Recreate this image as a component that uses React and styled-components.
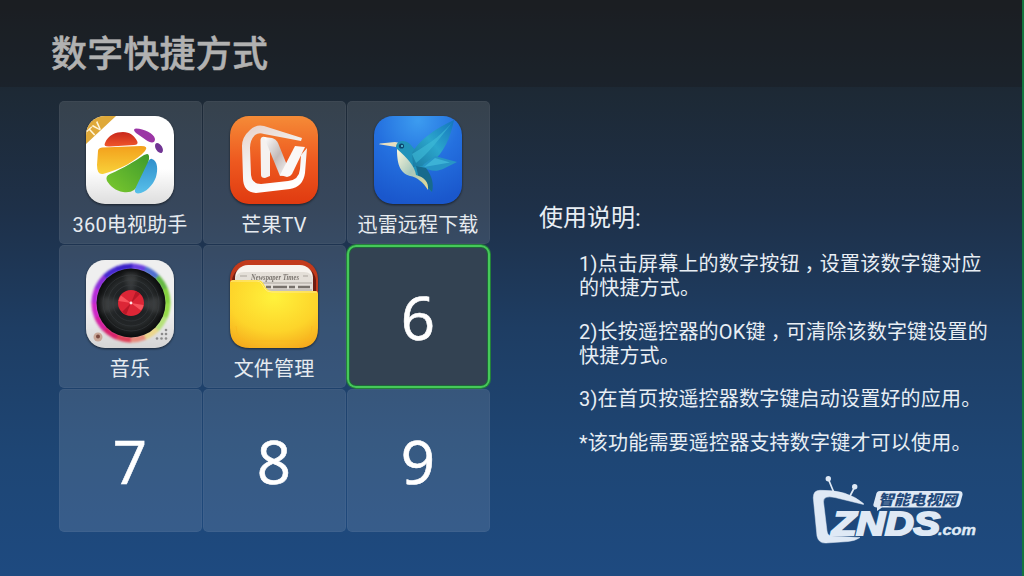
import React from 'react'
import styled, { createGlobalStyle } from 'styled-components'

const GlobalStyle = createGlobalStyle`
  * {
    box-sizing: border-box;
    margin: 0;
    padding: 0;
  }

  body {
    overflow: hidden;
    background: #1e4a80;
    font-family: Roboto, "Noto Sans CJK SC", sans-serif;
  }
`

const AssistantIcon = () => (
  <Icon viewBox="0 0 88 88">
    <defs>
      <linearGradient id="paper" x2="0" y2="1">
        <stop offset="0.6" stopColor="#fff" />
        <stop offset="1" stopColor="#dedede" />
      </linearGradient>
      <linearGradient id="red" x2="0" y2="1">
        <stop offset="0" stopColor="#c8281c" />
        <stop offset="1" stopColor="#f0562a" />
      </linearGradient>
      <linearGradient id="amber" x2="0" y2="1">
        <stop offset="0" stopColor="#f3a01c" />
        <stop offset="1" stopColor="#f8d23a" />
      </linearGradient>
      <linearGradient id="green" x1="1" x2="0" y2="1">
        <stop offset="0" stopColor="#3d9a2c" />
        <stop offset="1" stopColor="#7cc92e" />
      </linearGradient>
      <linearGradient id="sky" x2="0" y2="1">
        <stop offset="0" stopColor="#2f8fcb" />
        <stop offset="1" stopColor="#58c0ea" />
      </linearGradient>
      <clipPath id="round">
        <rect width="88" height="88" rx="19" />
      </clipPath>
    </defs>
    <g clipPath="url(#round)">
      <rect width="88" height="88" fill="url(#paper)" />
      <path d="M0 0H30L0 28Z" fill="#dfa93a" />
      <text x="3" y="18" transform="rotate(-43 9 16)" fill="#fff6dc" fontSize="12" fontWeight="500">TV</text>
    </g>
    <path d="M19 27C22 19 30 16 37 16C44 16 49 20 51.500 26Q52 29 48 29L24 30.500Q17 31 19 27Z" fill="url(#red)" />
    <path d="M12 35Q12 32 16 31.500L55 30Q63 30 59 35C50 45 35 53 17 58Q11 59 11 49Z" fill="url(#amber)" />
    <path d="M61 38Q63.500 38 63 43C61 56 55 68 48 74Q44 77 37 76C30 75 24 70 21 65Q19 60 24 58C38 52 49 45 58 39Z" fill="url(#green)" />
    <path d="M66 43C72 45 72 54 70 61C67 69 60 77 52 77.500Q47 77 50 71L62 46Q64 42 66 43Z" fill="url(#sky)" />
    <path d="M50 12.500C58 13 68 17 69 23C69 28 64 27 60 24L50 17Q46 13 50 12.500Z" fill="#9b35a5" />
    <ellipse cx="73" cy="32" rx="3.2" ry="5.5" transform="rotate(-32 73 32)" fill="#713594" />
  </Icon>
)

const MangoIcon = () => (
  <Icon viewBox="0 0 88 88">
    <defs>
      <linearGradient id="orange" x2="0" y2="1">
        <stop offset="0" stopColor="#f58b37" />
        <stop offset="0.5" stopColor="#ee5a20" />
        <stop offset="1" stopColor="#e03a10" />
      </linearGradient>
      <linearGradient id="silver" x2="0.4" y2="1">
        <stop offset="0" stopColor="#e7cfc6" />
        <stop offset="0.5" stopColor="#f1efee" />
        <stop offset="1" stopColor="#fff" />
      </linearGradient>
      <linearGradient id="fold" x2="1" y2="1">
        <stop offset="0" stopColor="#fff" />
        <stop offset="0.5" stopColor="#c3bbb9" />
        <stop offset="1" stopColor="#fff" />
      </linearGradient>
    </defs>
    <rect width="88" height="88" rx="19" fill="url(#orange)" />
    <path d="M72 22L34 10Q26 8 20 14Q12 21 12 30L13 62Q13 76 26 77L60 73Q73 71 75 57L77 32L71 39L70 53Q69 64 58 65L31 68Q22 68 21 59L20 32Q20 24 25 19Q29 16 34 18L71 25Z" fill="url(#silver)" />
    <path d="M30.500 24Q31 20 35 21L40 24L40 60L35 62Q31 62 31 59Z" fill="#f5f2f0" />
    <path d="M34 21L42 22Q46 23 48 27L61 59L50 60Z" fill="url(#fold)" />
    <path d="M65 30L75 31L62 58Q60 61 57 61L50 59Z" fill="#faf8f7" />
  </Icon>
)

const BirdIcon = () => (
  <Icon viewBox="0 0 88 88">
    <defs>
      <radialGradient id="blue" cx="0.5" cy="0.05" r="0.95">
        <stop offset="0" stopColor="#3c9cf0" />
        <stop offset="0.5" stopColor="#2470df" />
        <stop offset="1" stopColor="#1a57cc" />
      </radialGradient>
      <linearGradient id="wing" x1="1" x2="0" y2="1">
        <stop offset="0" stopColor="#1474bd" />
        <stop offset="0.5" stopColor="#2ba6cc" />
        <stop offset="1" stopColor="#1a7ba3" />
      </linearGradient>
      <linearGradient id="belly" x2="1" y2="1">
        <stop offset="0" stopColor="#fff9dc" />
        <stop offset="0.5" stopColor="#a7c8bc" />
        <stop offset="1" stopColor="#e9d994" />
      </linearGradient>
    </defs>
    <rect width="88" height="88" rx="19" fill="url(#blue)" />
    <path d="M22 31L5 28.300L6 27.500L21 26L26 27Z" fill="#e8dfc0" />
    <path d="M22 31C22 24 31 23 36 28L42 35L56 47L52 56L58 76L42 61L27 46Z" fill="#2193ba" />
    <path d="M38 37C45 24 62 12 80 4C77 20 70 37 58 46C50 51 43 50 39 51Z" fill="url(#wing)" />
    <path d="M42 47C54 38 66 22 80 4C70 17 58 26 38 38Z" fill="#3fbcd8" opacity="0.6" />
    <path d="M50 48L61 40L83 46L69 53C62 56 56 55 48 51Z" fill="#2795c5" />
    <path d="M50 51L61 42L76 46.500Z" fill="#3cb2d6" />
    <path d="M42 50L52 52C58 60 60 68 58 76L45 63Z" fill="#176a8d" />
    <path d="M23 33C23 46 25 57 36 60C43 61 49 66 54 74C55 66 50 61 42 59C41 50 33 42 23 33Z" fill="url(#belly)" />
    <circle cx="27.5" cy="30" r="2.6" fill="#0c4670" />
    <circle cx="28" cy="30" r="1" fill="#5cd0e6" />
  </Icon>
)

const ringColors = [
  '#6b3fe0', '#4f6fd0', '#65b842', '#84d03c', '#95dc46', '#b5e27a', '#ecd78c',
  '#e88b7c', '#df3f58', '#d8246c', '#d420a0', '#cf28c8', '#b62ad8', '#8a2fd8', '#4426cf', '#3b20c9',
]

const MusicIcon = () => {
  const point = (i) => {
    const a = (i / ringColors.length) * 2 * Math.PI
    return `${45 + 36.5 * Math.sin(a)} ${43 - 36.5 * Math.cos(a)}`
  }
  return (
    <Icon viewBox="0 0 88 88">
      <defs>
        <radialGradient id="disc">
          <stop offset="0.35" stopColor="#1d2023" />
          <stop offset="0.7" stopColor="#242728" />
          <stop offset="1" stopColor="#0b0c0d" />
        </radialGradient>
        <filter id="soft"><feGaussianBlur stdDeviation="1" /></filter>
        <filter id="sheen"><feGaussianBlur stdDeviation="2" /></filter>
      </defs>
      <rect width="88" height="88" rx="19" fill="url(#paper)" />
      <rect width="88" height="88" rx="19" fill="#b8b8b8" opacity="0.22" />
      <g fill="none" strokeWidth="6" filter="url(#soft)">
        {ringColors.map((color, i) => (
          <path key={i} d={`M${point(i)}A36.5 36.5 0 0 1 ${point(i + 1.1)}`} stroke={color} />
        ))}
      </g>
      <circle cx="45" cy="43" r="34.500" fill="url(#disc)" />
      <g fill="#fff" filter="url(#sheen)">
        <path d="M45 43L38 13A32 32 0 0 1 52 13Z" opacity="0.1" />
        <path d="M45 43L15 36A32 32 0 0 0 16 54ZM45 43L75 36A32 32 0 0 1 74 54Z" opacity="0.1" />
      </g>
      <g fill="none" stroke="#3c4144" strokeWidth="0.5">
        <circle cx="45" cy="43" r="18" />
        <circle cx="45" cy="43" r="23" />
        <circle cx="45" cy="43" r="28" />
      </g>
      <circle cx="45" cy="43" r="13" fill="#dc2636" />
      <path d="M45 43L32.500 41Q33 38 35 35.500ZM45 43L57.500 45Q57 48 55 50.500Z" fill="#f7525c" />
      <path d="M45 43L50 31L54 34ZM45 43L40 55L36 52Z" fill="#b91828" />
      <circle cx="45" cy="43" r="1.4" fill="#ffe5e5" />
      <circle cx="12" cy="77" r="4.5" fill="#c9a899" />
      <circle cx="12" cy="76.5" r="2" fill="#7b4a40" />
      <g fill="#8b8b8b">
        {[[80, 70], [76, 74], [80, 74], [71, 78.5], [75.5, 78.5], [80, 78.5]].map(([x, y]) => (
          <circle key={`${x}-${y}`} cx={x} cy={y} r="1.3" />
        ))}
      </g>
    </Icon>
  )
}

const FolderIcon = () => (
  <Icon viewBox="0 0 88 88">
    <defs>
      <radialGradient id="folder" cx="0.5" cy="0.25" r="0.85">
        <stop offset="0" stopColor="#fff23c" />
        <stop offset="0.6" stopColor="#fdd42a" />
        <stop offset="1" stopColor="#f4a51b" />
      </radialGradient>
    </defs>
    <rect width="88" height="70" rx="19" fill="#c23a1c" />
    <path d="M2 24V20Q4 7 20 6H68Q84 7 86 20V34H2Z" fill="#6d1d12" />
    <rect x="5" y="5" width="78" height="40" rx="13" fill="#f7f3ee" />
    <path d="M5 20Q6 12 14 12H74Q82 12 83 20V40H5Z" fill="#e4dfd8" />
    <text x="21" y="19.500" fill="#7b756f" fontFamily="Liberation Serif, serif" fontStyle="italic" fontWeight="700" fontSize="8" textLength="48" lengthAdjust="spacingAndGlyphs">Newspaper Times</text>
    <path d="M10 16h7M73 16h5M33 23h49M36 30h46" stroke="#aaa49d" strokeWidth="1" />
    <path d="M36 27h5M43 27h14M59 27h6M68 27h12" stroke="#77716b" strokeWidth="2.500" />
    <path d="M0 23Q0 20 3 20H27Q31 20 33 23L36 28Q38 31 42 31H85Q88 31 88 34V68Q88 88 68 88H20Q0 88 0 68Z" fill="url(#folder)" />
    <path d="M1 22Q1 21 3 21H27Q30 21 32 24L35 29Q37 32 42 32H87" fill="none" stroke="#ffe98a" strokeWidth="1" />
    <path d="M6 66Q6 81 21 81H67Q82 81 82 66" fill="none" stroke="#f9b81e" strokeWidth="1" opacity="0.7" />
  </Icon>
)

const ZndsLogo = () => (
  <Logo viewBox="0 0 180 76">
    <g fill="#dfe9f5" stroke="#dfe9f5">
      <circle cx="19.300" cy="4.700" r="2.700" stroke="none" />
      <circle cx="45.700" cy="12.700" r="2.700" stroke="none" />
      <path d="M19.300 5L25.500 20M45.700 13L41 22" strokeWidth="1.700" />
      <path d="M54.500 30.500L26 23.500Q14 21 14.500 28L18 57Q18.500 62 23 62L51 63.500Q46 67 39 67.500L17 69Q9.500 69.500 8 62L4.300 24Q4 16.500 11 16.300Q38 15.500 54.500 29.500Z" strokeWidth="0.500" />
      <path d="M67 21Q67.500 17 71 17H150Q154 17 153.500 21L151 30Q150 33.500 146 33.500H73L68 37V33.500Q63.500 33 64.500 30Z" stroke="none" />
    </g>
    <text x="69" y="31" fill="#23497a" fontSize="14.500" fontWeight="900" fontStyle="italic" textLength="79" lengthAdjust="spacingAndGlyphs">智能电视网</text>
    <text x="23" y="60.500" fill="#dfe9f5" stroke="#dfe9f5" strokeWidth="2.200" fontFamily="Liberation Sans, sans-serif" fontSize="33.500" fontWeight="700" fontStyle="italic" textLength="108" lengthAdjust="spacingAndGlyphs">ZNDS</text>
    <text x="129" y="60.500" fill="#dfe9f5" stroke="#dfe9f5" strokeWidth="0.400" fontFamily="Liberation Sans, sans-serif" fontSize="14.500" fontWeight="700" fontStyle="italic" textLength="38" lengthAdjust="spacingAndGlyphs">.com</text>
  </Logo>
)

const shortcuts = [
  { label: '360电视助手', icon: AssistantIcon },
  { label: '芒果TV', icon: MangoIcon },
  { label: '迅雷远程下载', icon: BirdIcon },
  { label: '音乐', icon: MusicIcon },
  { label: '文件管理', icon: FolderIcon },
  {}, {}, {}, {},
]

const App = () => {
  return (
    <Screen>
      <GlobalStyle />
      <Header>
        <h1>数字快捷方式</h1>
      </Header>
      <Content>
        <Keypad>
          {shortcuts.map(({ label, icon: AppIcon }, i) => (
            <Key key={i} $selected={i === 5}>
              {AppIcon ? (
                <>
                  <AppIcon />
                  <Label>{label}</Label>
                </>
              ) : (
                <Digit>{i + 1}</Digit>
              )}
            </Key>
          ))}
        </Keypad>
        <Help>
          <h2>使用说明:</h2>
          <p>1)点击屏幕上的数字按钮<Comma>，</Comma>设置该数字键对应<br />的快捷方式。</p>
          <p>2)长按遥控器的OK键<Comma>，</Comma>可清除该数字键设置的<br />快捷方式。</p>
          <p>3)在首页按遥控器数字键启动设置好的应用。</p>
          <p>*该功能需要遥控器支持数字键才可以使用。</p>
          <ZndsLogo />
        </Help>
      </Content>
    </Screen>
  )
}

const Screen = styled.div`
  width: 1024px;
  height: 576px;
  overflow: hidden;
  border-right: 2px solid #14763f;
  background: linear-gradient(#1d2127 0%, #1d2935 16%, #1e3048 36%, #1e3d63 57%, #1e4675 80%, #1e4a80 100%);
`

const Header = styled.header`
  height: 87px;
  padding: 28px 0 0 51px;
  background: rgba(22, 22, 24, 0.3);

  h1 {
    color: #b1b1b1;
    font-size: 36px;
    font-weight: 500;
    line-height: 54px;
    letter-spacing: 0.2px;
    -webkit-text-stroke: 0.5px #b1b1b1;
  }
`

const Content = styled.main`
  display: flex;
  padding: 14px 0 0 59px;
`

const Keypad = styled.div`
  display: grid;
  grid-template-columns: repeat(3, 143px);
  grid-auto-rows: 143px;
  gap: 1px;
`

const Key = styled.div`
  display: flex;
  flex-direction: column;
  align-items: center;
  padding: 15px 1px 0 0;
  border-radius: ${(props) => (props.$selected ? '9px' : '5px')};
  background: ${(props) => (props.$selected ? '#334252' : 'rgba(255, 255, 255, 0.115)')};
  box-shadow: ${(props) =>
    props.$selected
      ? '0 0 0 1px #23803a, inset 0 0 0 2px #46c85a, inset 0 0 0 3px #1d6a38'
      : 'inset 0 0 0 1px rgba(255, 255, 255, 0.035)'};
`

const Icon = styled.svg`
  flex: none;
  width: 88px;
  height: 88px;
  overflow: visible;
  filter: drop-shadow(0 1px 1px rgba(0, 0, 0, 0.55));
`

const Label = styled.span`
  margin-top: 6px;
  color: #e6ebf0;
  font-size: 20px;
  line-height: 30px;
  letter-spacing: 0.15px;
  white-space: nowrap;
`

const Digit = styled.span`
  margin-top: 19px;
  color: #fff;
  font-family: "Open Sans", sans-serif;
  font-size: 60px;
  line-height: 76px;
  -webkit-text-stroke: 0.6px #fff;
`

const Help = styled.section`
  display: flex;
  flex-direction: column;
  align-items: flex-start;
  padding: 101px 0 0 49px;
  color: #e8eef4;

  h2 {
    margin-bottom: 18px;
    font-size: 24px;
    font-weight: 400;
    line-height: 32px;
  }
  p {
    margin: 0 0 19.500px 40px;
    font-size: 20px;
    line-height: 24px;
    letter-spacing: 0.2px;
    white-space: nowrap;
  }
`

/* half-width comma centred in a full-width cell */
const Comma = styled.span`
  margin: 0 5px;
  font-feature-settings: "halt";
`

const Logo = styled.svg`
  width: 180px;
  height: 76px;
  margin: 0 0 0 270px;
`

export default App
